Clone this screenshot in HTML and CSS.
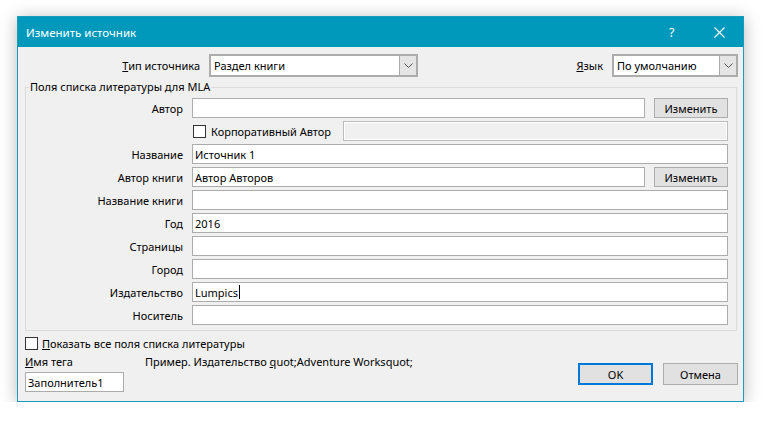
FILE: index.html
```html
<!DOCTYPE html>
<html lang="ru">
<head>
<meta charset="utf-8">
<title>Изменить источник</title>
<link rel="stylesheet" href="styles.css">
</head>
<body>
<div class="page">
  <div class="dialog">
    <div class="titlebar">
      <span class="title">Изменить источник</span>
      <span class="help">?</span>
      <span class="close">
        <svg width="11" height="11" viewBox="0 0 11 11"><path d="M0.5 0.5L10.5 10.5M10.5 0.5L0.5 10.5" stroke="#fff" stroke-width="1.1" fill="none"/></svg>
      </span>
    </div>
    <div class="content">
      <div class="toprow">
        <label class="type-label"><u>Т</u>ип источника</label>
        <div class="select sel-type">
          <span class="val">Раздел книги</span>
          <span class="arrow"><svg width="9" height="5" viewBox="0 0 9 5"><path d="M0.5 0.5L4.5 4.5L8.5 0.5" stroke="#505050" fill="none"/></svg></span>
        </div>
        <label class="lang-label"><u>Я</u>зык</label>
        <div class="select sel-lang">
          <span class="val">По умолчанию</span>
          <span class="arrow"><svg width="9" height="5" viewBox="0 0 9 5"><path d="M0.5 0.5L4.5 4.5L8.5 0.5" stroke="#505050" fill="none"/></svg></span>
        </div>
      </div>
      <fieldset class="group">
        <legend>Поля списка литературы для MLA</legend>
        <div class="grid">
          <label class="flabel">Автор</label>
          <div class="input"></div>
          <button class="btn">Изменить</button>

          <div class="corp">
            <span class="cb"></span>
            <span class="corp-text">Корпоративный Автор</span>
            <div class="input disabled"></div>
          </div>

          <label class="flabel">Название</label>
          <div class="input wide">Источник 1</div>

          <label class="flabel">Автор книги</label>
          <div class="input">Автор Авторов</div>
          <button class="btn">Изменить</button>

          <label class="flabel">Название книги</label>
          <div class="input wide"></div>

          <label class="flabel">Год</label>
          <div class="input wide">2016</div>

          <label class="flabel">Страницы</label>
          <div class="input wide"></div>

          <label class="flabel">Город</label>
          <div class="input wide"></div>

          <label class="flabel">Издательство</label>
          <div class="input wide">Lumpics<span class="caret"></span></div>

          <label class="flabel">Носитель</label>
          <div class="input wide"></div>
        </div>
      </fieldset>
      <div class="showall">
        <span class="cb"></span>
        <span><u>П</u>оказать все поля списка литературы</span>
      </div>
      <div class="bottom">
        <div class="tagcol">
          <div class="tag-label"><u>И</u>мя тега</div>
          <div class="input tag">Заполнитель1</div>
        </div>
        <div class="example">Пример. Издательство <u>q</u>uot;Adventure Worksquot;</div>
        <div class="buttons">
          <button class="btn big ok">OK</button>
          <button class="btn big">Отмена</button>
        </div>
      </div>
    </div>
  </div>
</div>
</body>
</html>
```
FILE: styles.css
```css
* { box-sizing: border-box; }
html, body { margin: 0; background: #ffffff; }
body {
  font-family: "Noto Sans", "Open Sans", sans-serif;
  font-size: 11px;
  color: #000;
}
.page { padding: 16px 0 0 17px; }
.dialog {
  width: 727px;
  height: 386px;
  border: 1px solid #1a9dbd;
  background: #f0f0f0;
  box-shadow: 0 2px 16px rgba(0,0,0,0.28);
  display: flex;
  flex-direction: column;
}
.titlebar {
  height: 30px;
  background: #0099bc;
  color: #fff;
  display: flex;
  align-items: center;
  padding-left: 8px;
  flex: none;
}
.title { font-size: 11.5px; }
.help { margin-left: auto; font-size: 12.5px; width: 8px; margin-right: 37px; }
.close { width: 11px; height: 11px; margin-right: 18px; display: flex; }
.content {
  padding: 7px 5px 0 7px;
  display: flex;
  flex-direction: column;
}
.toprow {
  display: flex;
  align-items: center;
  height: 23px;
}
.type-label { width: 175px; text-align: right; margin-right: 9px; }
.lang-label { margin-left: auto; margin-right: 9px; }
.select {
  height: 23px;
  border: 2px solid #acacac;
  background: #fff;
  display: flex;
  align-items: stretch;
}
.select .val { flex: 1; padding-left: 3px; display: flex; align-items: center; }
.select .arrow {
  width: 17px;
  background: #e5e5e5;
  border-left: 1px solid #acacac;
  display: flex;
  align-items: center;
  justify-content: center;
}
.sel-type { width: 209px; }
.sel-lang { width: 126px; }
.group {
  margin: 2px 1px 0 0;
  padding: 3px 8px 5px 0;
  border: 1px solid #dcdcdc;
  min-width: 0;
}
.group legend {
  padding: 0 1px;
  margin-left: 3px;
  line-height: 16px;
}
.grid {
  display: grid;
  grid-template-columns: 157px 1fr 74px;
  grid-auto-rows: 20px;
  column-gap: 9px;
  row-gap: 3px;
}
.flabel {
  text-align: right;
  align-self: center;
  grid-column: 1;
}
.input {
  height: 20px;
  border: 1px solid #acacac;
  background: #fff;
  padding-left: 2px;
  display: flex;
  align-items: center;
  white-space: nowrap;
}
.input.wide { grid-column: 2 / 4; }
.btn {
  font-family: inherit;
  font-size: 11px;
  color: #000;
  background: #e1e1e1;
  border: 1px solid #adadad;
  padding: 0;
  height: 20px;
}
.corp {
  grid-column: 2 / 4;
  display: flex;
  align-items: center;
}
.cb {
  width: 13px;
  height: 13px;
  border: 1px solid #333;
  background: #fff;
  flex: none;
}
.corp .cb { margin-left: 1px; }
.corp-text { margin-left: 5px; }
.input.disabled {
  margin-left: auto;
  width: 385px;
  background: #f0f0f0;
  border-color: #bcbcbc;
  box-shadow: inset 0 0 0 1px #fff;
}
.caret {
  display: inline-block;
  width: 1px;
  height: 14px;
  background: #000;
  margin-left: 1px;
}
.showall {
  display: flex;
  align-items: center;
  margin-top: 5px;
  height: 15px;
}
.showall .cb { margin-right: 4px; }
.bottom {
  display: flex;
  margin-top: 3px;
}
.tagcol { display: flex; flex-direction: column; }
.tag-label { line-height: 16px; }
.input.tag { width: 99px; margin-top: 2px; }
.example { margin-left: 21px; line-height: 16px; }
.buttons {
  margin-left: auto;
  margin-top: 9px;
  display: flex;
  gap: 10px;
}
.btn.big { width: 75px; height: 22px; }
.btn.ok { border: 2px solid #0078d7; }
```
